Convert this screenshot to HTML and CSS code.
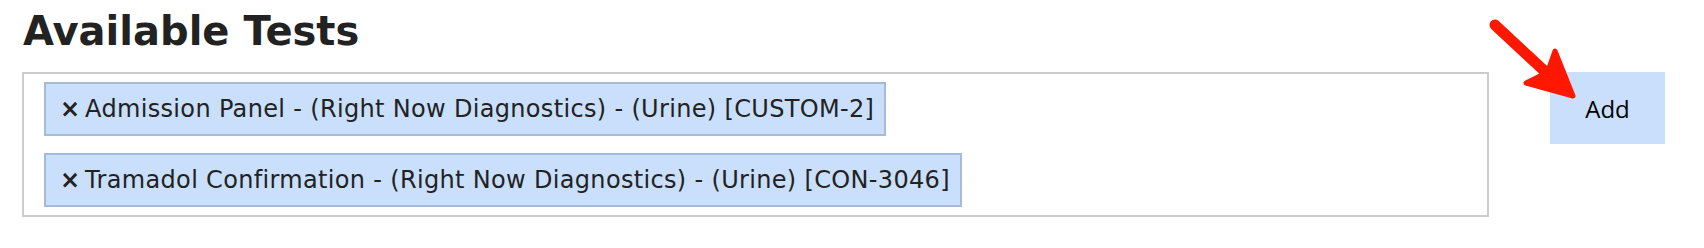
FILE: index.html
```html
<!DOCTYPE html>
<html>
<head>
<meta charset="utf-8">
<link rel="stylesheet" href="styles.css">
</head>
<body>
<div class="page">
  <h1 class="title">Available Tests</h1>
  <div class="row">
    <div class="choices">
      <div class="tag"><span class="remove">×</span><span class="label">Admission Panel - (Right Now Diagnostics) - (Urine) [CUSTOM-2]</span></div>
      <div class="tag"><span class="remove">×</span><span class="label">Tramadol Confirmation - (Right Now Diagnostics) - (Urine) [CON-3046]</span></div>
    </div>
    <button class="add-btn">Add</button>
  </div>
  <svg class="arrow" width="1704" height="248" viewBox="0 0 1704 248">
    <line x1="1495" y1="25" x2="1553" y2="79" stroke="#ff1700" stroke-width="11" stroke-linecap="round"/>
    <polygon points="1555,51 1573,96 1526,83 1542,75 1549,68" fill="#ff1700" stroke="#ff1700" stroke-width="5" stroke-linejoin="round"/>
  </svg>
</div>
</body>
</html>
```

FILE: styles.css
```css
html, body {
  margin: 0;
  padding: 0;
  background: #ffffff;
}

.page {
  position: relative;
  width: 1704px;
  height: 248px;
  box-sizing: border-box;
  padding: 8px 39px 0 22px;
  font-family: "DejaVu Sans", Verdana, sans-serif;
  color: #222222;
}

.title {
  margin: 0;
  font-family: "DejaVu Sans", Verdana, sans-serif;
  font-weight: bold;
  font-size: 40px;
  line-height: 46px;
  color: #222222;
  padding-left: 1px;
}

.row {
  display: flex;
  align-items: flex-start;
  gap: 61px;
  margin-top: 18px;
}

.choices {
  flex: 1;
  border: 2px solid #cccccc;
  padding: 8px 20px;
  display: flex;
  flex-direction: column;
  align-items: flex-start;
  gap: 17px;
}

.tag {
  display: flex;
  align-items: center;
  background: #c9dffc;
  border: 2px solid #a4bbd9;
  font-size: 24px;
  line-height: 50px;
  padding: 0 10px 0 14px;
  color: #222222;
}

.label {
  letter-spacing: 0.33px;
}

.remove {
  font-weight: bold;
  margin-right: 5px;
}

.add-btn {
  width: 115px;
  height: 72px;
  border: none;
  background: #c9dffc;
  font-family: "Open Sans", sans-serif;
  font-size: 24px;
  color: #000000;
  padding: 0;
  display: flex;
  align-items: center;
  justify-content: center;
}

.arrow {
  position: absolute;
  left: 0;
  top: 0;
  pointer-events: none;
}
```
